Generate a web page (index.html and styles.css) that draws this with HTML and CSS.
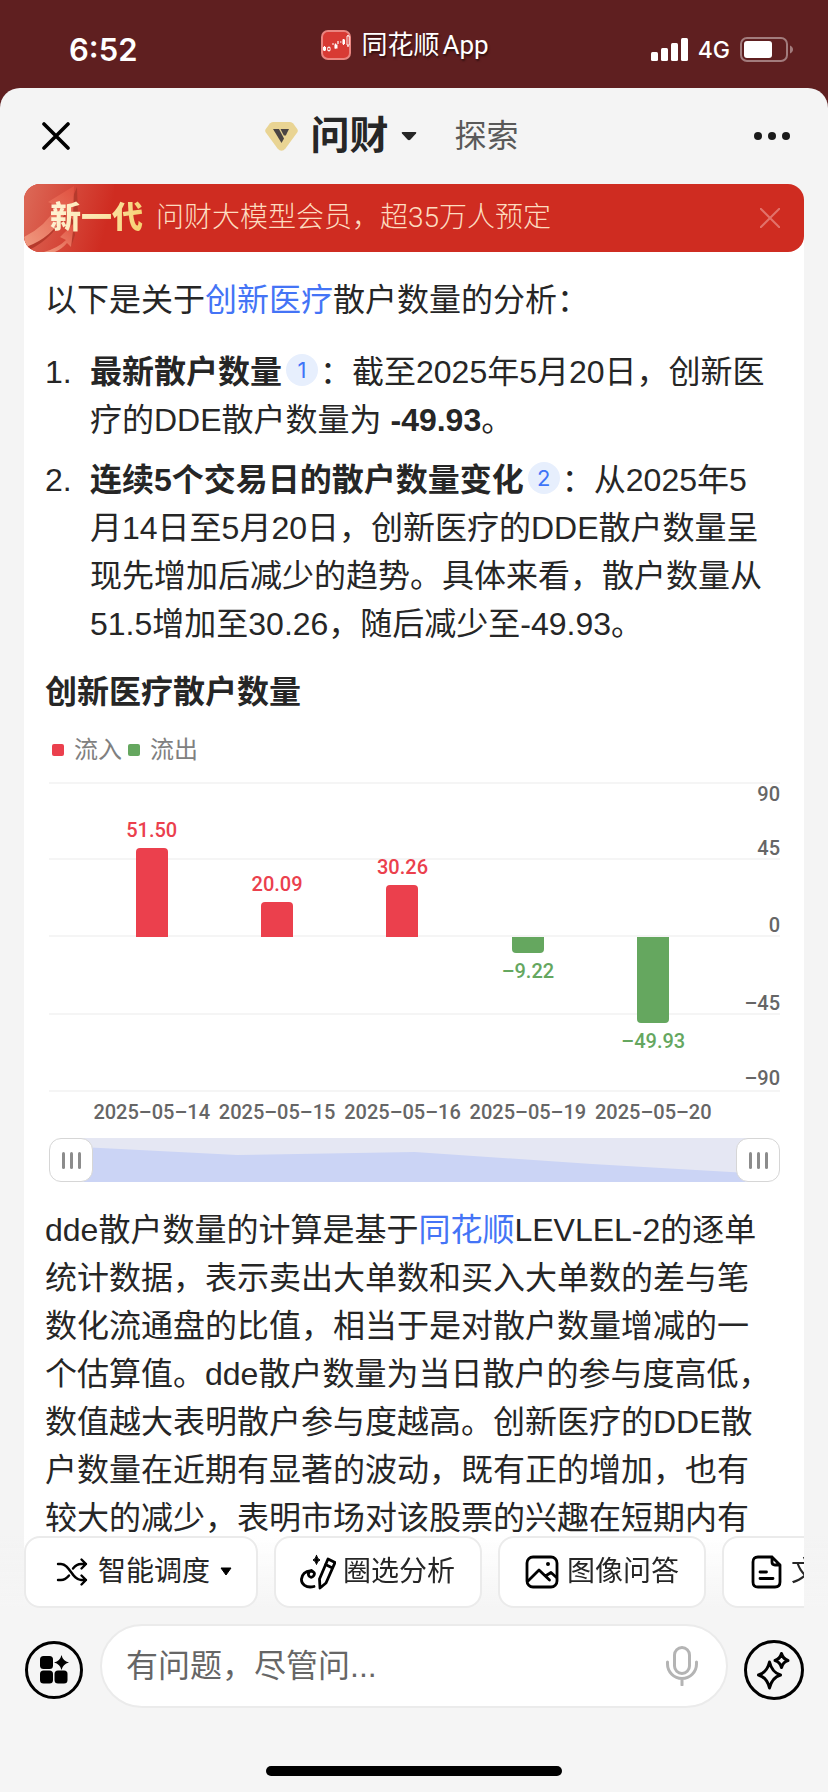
FILE: index.html
```html
<!DOCTYPE html>
<html lang="zh-CN">
<head>
<meta charset="utf-8">
<meta name="viewport" content="width=device-width, initial-scale=1">
<title>问财</title>
<link rel="stylesheet" href="styles.css">
</head>
<body>
<div class="status">
  <span class="status-time">6:52</span>
  <span class="status-app">
    <svg class="app-icon" viewBox="0 0 30 30" aria-hidden="true">
      <rect x="1" y="1" width="28" height="28" rx="6" fill="#d83a34" stroke="#ea8580" stroke-width="2"/>
      <path d="M3.500 16v5M8 16.500v5M11 14h2M14.500 13.500v5M17 11v3M19 12h1.500M22.500 9v6M27 5v12" stroke="#fff" stroke-width="1.200" fill="none"/>
      <path d="M2 17h3v3.500H2zM13.500 14.500h3v4h-3zM21.500 9.500h2.500v4.500h-2.500z" fill="#fff"/>
      <path d="M6.700 17.500h2.400v3H6.700zM26 6h2.200v9H26z" fill="#d83a34" stroke="#fff" stroke-width=".9"/>
    </svg>
    <span class="app-name"><span>同花顺</span><span>App</span></span>
  </span>
  <span class="status-right">
    <svg class="signal" viewBox="0 0 37 24" aria-hidden="true" fill="#fff">
      <rect x="0" y="14" width="7" height="9" rx="1.500"/><rect x="10" y="10" width="7" height="13" rx="1.500"/><rect x="20" y="5" width="7" height="18" rx="1.500"/><rect x="30" y="0" width="7" height="23" rx="1.500"/>
    </svg>
    <span class="network">4G</span>
    <svg class="battery" viewBox="0 0 54 26" aria-hidden="true">
      <rect x="1" y="1" width="46" height="23" rx="6" fill="none" stroke="#a27c7d" stroke-width="2"/>
      <rect x="4" y="4" width="28" height="17" rx="3" fill="#fff"/>
      <path d="M50 8.500c4 1.500 4 6.500 0 8z" fill="#a27c7d"/>
    </svg>
  </span>
</div>

<div class="sheet">
  <header class="topbar">
    <button class="icon-btn" type="button" aria-label="关闭">
      <svg class="i28" viewBox="0 0 28 28" fill="none" stroke="#000" stroke-width="3.600" stroke-linecap="round"><path d="M2 2l24 24M26 2L2 26"/></svg>
    </button>
    <nav class="tabs">
      <button class="tab tab-active" type="button">
        <svg class="gem" viewBox="0 0 33 29" aria-hidden="true">
          <path d="M8 0h17q2 0 3.200 1.600l4 5.500q1.200 1.700 0 3.500L20.500 26.500q-4 4.500-8 0L.8 10.600q-1.200-1.800 0-3.500l4-5.500Q6 0 8 0z" fill="#e9d493"/>
          <path d="M8 7h6l5 9.500-2.500 4.500z" fill="#4a4443"/><path d="M15.500 7H24l-3.200 6.500h-2z" fill="#4a4443"/>
        </svg>
        <span>问财</span>
        <svg class="caret" viewBox="0 0 16 9" aria-hidden="true"><path d="M1.500 0h13q1.500 0 .5 1.500L9.500 7.500q-1.500 1.500-3 0L1 1.500Q0 0 1.500 0z" fill="#262626"/></svg>
      </button>
      <button class="tab" type="button">探索</button>
    </nav>
    <button class="icon-btn end" type="button" aria-label="更多">
      <svg class="dots" viewBox="0 0 36 8" fill="#1a1a1a"><circle cx="4" cy="4" r="4"/><circle cx="18" cy="4" r="4"/><circle cx="32" cy="4" r="4"/></svg>
    </button>
  </header>

  <main class="card">
    <aside class="banner">
      <svg class="banner-art" viewBox="0 0 90 68" aria-hidden="true">
        <defs>
          <linearGradient id="glow" x1="0" y1="0" x2="1" y2=".2"><stop offset="0" stop-color="#dc6a58"/><stop offset=".55" stop-color="#d54739"/><stop offset="1" stop-color="#cf2c21"/></linearGradient>
          <linearGradient id="shaft" x1="0" y1="1" x2="1" y2="0"><stop offset="0" stop-color="#f09a80"/><stop offset="1" stop-color="#e0503f"/></linearGradient>
        </defs>
        <rect width="90" height="68" fill="url(#glow)"/>
        <path d="M2 58Q25 46 38 22l6 4Q30 54 5 66zM53 3l1 28-5 14-6-18zM49 37l2 14-4 12z" fill="#b63a2c"/>
        <path d="M0 53Q22 42 33 22l-9-4L50 2l-1 34-7-8Q28 54 2 63z" fill="url(#shaft)"/>
        <path d="M20 68Q34 64 42 56l-6-3 14-14-3 24-4-4q-5 6-12 9z" fill="url(#shaft)"/>
      </svg>
      <strong class="banner-tag">新一代</strong>
      <span class="banner-text">问财大模型会员，超35万人预定</span>
      <button class="icon-btn" type="button" aria-label="关闭提示">
        <svg class="i20" viewBox="0 0 20 20" fill="none" stroke="#e2726a" stroke-width="2"><path d="M0 0l20 20M20 0L0 20"/></svg>
      </button>
    </aside>

    <article class="answer">
      <p class="text">以下是关于<a href="#stock">创新医疗</a>散户数量的分析：</p>
      <ol class="list">
        <li><p class="text"><strong>最新散户数量</strong><sup class="ref">1</sup>：截至2025年5月20日，创新医疗的DDE散户数量为 <strong>-49.93</strong>。</p></li>
        <li><p class="text"><strong>连续5个交易日的散户数量变化</strong><sup class="ref">2</sup>：从2025年5月14日至5月20日，创新医疗的DDE散户数量呈现先增加后减少的趋势。具体来看，散户数量从51.5增加至30.26，随后减少至-49.93。</p></li>
      </ol>

      <section class="chart">
        <h2 class="chart-title">创新医疗散户数量</h2>
        <div class="legend"><span class="key key-in">流入</span><span class="key key-out">流出</span></div>
        <div class="plot">
          <div class="grid">
            <div class="band band-first"><span>90</span><span>45</span></div>
            <div class="band"><span>0</span></div>
            <div class="band"><span>–45</span></div>
            <div class="band band-last"><span>–90</span></div>
          </div>
          <div class="bars">
            <div class="col up"><span>51.50</span><i style="height:28.600%"></i></div>
            <div class="col up"><span>20.09</span><i style="height:11.200%"></i></div>
            <div class="col up"><span>30.26</span><i style="height:16.800%"></i></div>
            <div class="col down"><i style="height:5.100%"></i><span>–9.22</span></div>
            <div class="col down"><i style="height:27.700%"></i><span>–49.93</span></div>
          </div>
        </div>
        <div class="dates"><span>2025–05–14</span><span>2025–05–15</span><span>2025–05–16</span><span>2025–05–19</span><span>2025–05–20</span></div>
        <div class="range">
          <button class="handle" type="button" aria-label="起始"><i></i><i></i><i></i></button>
          <svg class="range-area" viewBox="0 0 688 44" preserveAspectRatio="none" aria-hidden="true"><rect width="688" height="44" fill="#e5e7f3"/><path d="M0 9L161 17 344 14 527 26 688 35V44H0z" fill="#cbd4f5"/></svg>
          <button class="handle" type="button" aria-label="结束"><i></i><i></i><i></i></button>
        </div>
      </section>

      <p class="text">dde散户数量的计算是基于<a href="#ths">同花顺</a>LEVLEL-2的逐单统计数据，表示卖出大单数和买入大单数的差与笔数化流通盘的比值，相当于是对散户数量增减的一个估算值。dde散户数量为当日散户的参与度高低，数值越大表明散户参与度越高。创新医疗的DDE散户数量在近期有显著的波动，既有正的增加，也有较大的减少，表明市场对该股票的兴趣在短期内有</p>
    </article>
  </main>
</div>

<footer class="dock">
  <div class="chips">
    <button class="chip chip-menu" type="button">
      <svg class="i32" viewBox="0 0 32 32" fill="none" stroke="#000" stroke-width="2.400" stroke-linecap="round" stroke-linejoin="round"><path d="M2 8h3c9 0 11 16 20 16h5M2 24h3c3.500 0 6-2 8-4.500M17 12.500C19 10 21.500 8 25 8h5M25.500 3.500L30 8l-4.500 4.500M25.500 19.500L30 24l-4.500 4.500"/></svg>
      <span>智能调度</span>
      <svg class="tri" viewBox="0 0 12 10" aria-hidden="true"><path d="M1 1h10L6 8z" stroke="#000" stroke-linejoin="round"/></svg>
    </button>
    <button class="chip" type="button">
      <svg class="i36" viewBox="0 0 36 36" fill="none" stroke="#000" stroke-width="2.800" stroke-linecap="round" stroke-linejoin="round"><path d="M14 32.500C6 34.500 1 30 1.500 25c.4-4.500 4-8 8.500-8 4 0 5.500 2.500 3.500 5-1.500 2-4.500 1.500-5-1s1.500-4 3-4.500"/><path d="M28 5l7 3.500L26 29l-6 5-.5-9zM25.500 10.500l7 3.500"/><path d="M16.500 1.500q.8 3.700 3.500 4.500-2.700.8-3.500 4.500-.8-3.700-3.500-4.500 2.700-.8 3.500-4.500z" fill="#000" stroke-width="1"/></svg>
      <span>圈选分析</span>
    </button>
    <button class="chip" type="button">
      <svg class="i36" viewBox="0 0 36 36" fill="none" stroke="#000" stroke-width="2.800" stroke-linecap="round" stroke-linejoin="round"><rect x="3" y="3" width="30" height="30" rx="6"/><path d="M4 27l11-11 10.500 10M21.500 22l5.500-3.500 5.500 5"/><circle cx="24" cy="10" r="1" fill="#000" stroke-width="2"/></svg>
      <span>图像问答</span>
    </button>
    <button class="chip" type="button">
      <svg class="i36" viewBox="0 0 36 36" fill="none" stroke="#000" stroke-width="2.800" stroke-linecap="round" stroke-linejoin="round"><path d="M10 3h14l8 8v17q0 5-5 5H10q-5 0-5-5V8q0-5 5-5zM24 3v5q0 3 3 3h5M12 18h6.500M12 24.500h13"/></svg>
      <span>文档问答</span>
    </button>
  </div>
  <div class="composer">
    <button class="icon-btn round" type="button" aria-label="功能">
      <svg class="i60" viewBox="0 0 60 60"><circle cx="30" cy="30" r="27.500" fill="none" stroke="#000" stroke-width="3"/><rect x="16" y="16" width="13" height="13" rx="3.500"/><rect x="16" y="30.500" width="13" height="13" rx="3.500"/><rect x="30.500" y="30.500" width="13" height="13" rx="3.500"/><path d="M37.500 15q1.300 6 7.500 7.500-6.200 1.500-7.500 7.500-1.300-6-7.500-7.500 6.200-1.500 7.500-7.500z"/></svg>
    </button>
    <div class="field">
      <input class="field-input" type="text" aria-label="提问" placeholder="有问题，尽管问...">
      <button class="icon-btn" type="button" aria-label="语音">
        <svg class="mic" viewBox="0 0 32 40" fill="none" stroke="#b4b4b4" stroke-width="3" stroke-linecap="round"><rect x="8.500" y="1.500" width="15" height="26" rx="7.500"/><path d="M1.500 16v2a14.500 14.500 0 0 0 29 0v-2M16 33v6"/></svg>
      </button>
    </div>
    <button class="icon-btn round" type="button" aria-label="智能">
      <svg class="i60" viewBox="0 0 60 60" fill="none" stroke="#000" stroke-width="3" stroke-linejoin="round"><circle cx="30" cy="30" r="28.500"/><path d="M25.500 22q2.500 10.500 11 13-8.500 2.500-11 13-2.500-10.500-11-13 8.500-2.500 11-13z"/><path d="M37.500 13.500q1.500 5.500 6.500 7-5 1.500-6.500 7-1.500-5.500-6.500-7 5-1.500 6.500-7z"/></svg>
    </button>
  </div>
  <div class="home"></div>
</footer>
</body>
</html>
```
FILE: styles.css
```css
* { box-sizing: border-box; }
body {
  margin: 0;
  min-height: 100vh;
  background: #5f1f20;
  color: #262626;
  font-family: "Liberation Sans", "Noto Sans CJK SC", sans-serif;
  font-size: 32px;
  overflow-x: hidden;
  display: flex;
  flex-direction: column;
}
button {
  margin: 0;
  padding: 0;
  border: 0;
  background: none;
  color: inherit;
  font: inherit;
}
svg { display: block; flex: none; }
p, ol, h2 { margin: 0; padding: 0; }
a { color: #4474f6; text-decoration: none; }

.icon-btn { display: flex; flex: none; }
.i20 { width: 20px; height: 20px; }
.i28 { width: 28px; height: 28px; }
.i32 { width: 32px; height: 32px; }
.i36 { width: 36px; height: 36px; }
.i60 { width: 60px; height: 60px; }

.status {
  height: 88px;
  padding: 12px 34px 0;
  display: grid;
  grid-template-columns: 1fr auto 1fr;
  align-items: center;
  color: #fff;
}
.status-time {
  padding-left: 35px;
  font: 600 31px/40px Inter, sans-serif;
}
.status-app {
  display: flex;
  align-items: center;
  gap: 10px;
  padding: 0 18px 10px 0;
}
.app-icon { width: 30px; height: 30px; }
.app-name {
  display: flex;
  gap: 3px;
  font: 400 26px/32px Roboto, "Noto Sans CJK SC", sans-serif;
  text-shadow: 1px 2px 2px rgba(0, 0, 0, .5);
}
.status-right {
  display: flex;
  align-items: center;
  justify-content: flex-end;
  gap: 10px;
}
.signal { width: 37px; height: 24px; }
.network { font: 500 23px/28px Inter, sans-serif; }
.battery { width: 54px; height: 26px; }

.sheet {
  flex: 1;
  display: flex;
  flex-direction: column;
  padding: 0 24px;
  background: #f4f4f4;
  border-radius: 20px 20px 0 0;
}
.topbar {
  height: 96px;
  padding: 0 14px 0 18px;
  display: grid;
  grid-template-columns: 1fr auto 1fr;
  align-items: center;
}
.tabs {
  display: flex;
  align-items: center;
  gap: 38px;
  padding-right: 48px;
}
.tab { display: flex; align-items: center; color: #595959; line-height: 48px; }
.tab-active {
  gap: 12px;
  color: #262626;
  font-size: 39px;
  font-weight: 700;
}
.gem { width: 33px; height: 29px; }
.caret { width: 16px; height: 9px; }
.end { justify-self: end; }
.dots { width: 36px; height: 8px; }

.card {
  flex: 1;
  background: #fff;
  border-radius: 16px 16px 0 0;
}
.banner {
  position: relative;
  height: 68px;
  padding: 0 24px 0 26px;
  display: flex;
  align-items: center;
  gap: 13px;
  overflow: hidden;
  background: #cf2c21;
  border-radius: 16px;
}
.banner-art {
  position: absolute;
  left: 0;
  top: 0;
  width: 90px;
  height: 68px;
}
.banner-tag {
  position: relative;
  font-size: 31px;
  line-height: 40px;
  font-weight: 900;
  background: linear-gradient(100deg, #fff3d6, #fbe3a4 60%, #f6cf6c);
  -webkit-background-clip: text;
  background-clip: text;
  color: transparent;
}
.banner-text {
  flex: 1;
  color: #fddcc0;
  font: 300 28px/40px Roboto, "Noto Sans CJK SC", sans-serif;
}

.answer { padding: 24px 28px 240px 21px; }
.text { line-height: 48px; }
.list {
  list-style: none;
  counter-reset: item;
  padding: 24px 0 20px;
  display: grid;
  gap: 12px;
}
.list li {
  counter-increment: item;
  display: grid;
  grid-template-columns: 45px 1fr;
  line-height: 48px;
}
.list li::before { content: counter(item) "."; }
.ref {
  display: inline-block;
  width: 32px;
  height: 32px;
  margin: 0 2px 0 4px;
  border-radius: 50%;
  background: #e7effd;
  color: #3e74f8;
  font: 400 22px/32px Inter, sans-serif;
  text-align: center;
  vertical-align: text-top;
}

.chart { padding: 0 0 24px 4px; margin-right: -4px; }
.chart-title {
  margin-left: -4px;
  font-size: 32px;
  line-height: 48px;
  font-weight: 700;
}
.legend {
  display: flex;
  gap: 6px;
  padding: 16px 0 14px 3px;
  color: #808080;
  font-size: 24px;
  line-height: 36px;
}
.key { display: flex; align-items: center; gap: 10px; }
.key::before { content: ""; width: 12px; height: 12px; border-radius: 2px; }
.key-in::before { background: #eb404d; }
.key-out::before { background: #65a75f; }

.plot {
  position: relative;
  height: 310px;
  font: 500 20px/24px Roboto, sans-serif;
}
.grid {
  height: 100%;
  display: grid;
  grid-template-rows: repeat(4, 1fr);
  color: #666;
  line-height: 20px;
}
.band {
  display: flex;
  flex-direction: column;
  justify-content: flex-end;
  align-items: flex-end;
  border-bottom: 2px solid #f5f5f5;
}
.band-first { justify-content: space-between; border-top: 2px solid #f5f5f5; }
.band-last { padding-bottom: 2px; }
.bars {
  position: absolute;
  inset: 0;
  padding: 0 64px 0 40px;
  display: grid;
  grid-template-columns: repeat(5, 1fr);
}
.col {
  display: flex;
  flex-direction: column;
  align-items: center;
  gap: 6px;
}
.col i { width: 32px; }
.up { justify-content: flex-end; color: #eb404d; }
.up::after { content: ""; height: 50%; margin-top: -6px; }
.up i { background: #eb404d; border-radius: 4px 4px 0 0; }
.down { color: #65a75f; }
.down::before { content: ""; height: 50%; margin-bottom: -6px; }
.down i { background: #65a75f; border-radius: 0 0 4px 4px; }
.dates {
  display: grid;
  grid-template-columns: repeat(5, 1fr);
  padding: 8px 64px 14px 40px;
  color: #666;
  font: 500 20px/24px Roboto, sans-serif;
  text-align: center;
  white-space: nowrap;
}
.range { display: flex; height: 44px; }
.range-area { flex: 1; width: 0; height: 44px; margin: 0 -12px; }
.handle {
  z-index: 1;
  flex: none;
  width: 44px;
  height: 44px;
  display: flex;
  align-items: center;
  justify-content: center;
  gap: 5px;
  border: 1px solid #d6d6d6;
  border-radius: 12px;
  background: #fff;
}
.handle i { width: 3px; height: 17px; border-radius: 2px; background: #8c8c8c; }

.dock {
  position: fixed;
  left: 0;
  right: 0;
  bottom: 0;
  background: linear-gradient(rgba(245, 245, 245, 0), #f5f5f5 72px);
}
.chips {
  margin: 0 24px 16px;
  display: flex;
  gap: 16px;
  overflow: hidden;
}
.chip {
  flex: none;
  height: 72px;
  padding: 0 25px 0 24px;
  display: flex;
  align-items: center;
  gap: 7px;
  border: 2px solid #ebebeb;
  border-radius: 16px;
  background: #fff;
  font-size: 28px;
  line-height: 40px;
}
.chip-menu { gap: 10px; padding: 0 24px 0 30px; }
.tri { width: 12px; height: 10px; }
.composer {
  padding: 0 24px;
  display: flex;
  align-items: center;
  gap: 16px;
}
.round { padding-top: 8px; }
.field {
  flex: 1;
  min-width: 0;
  height: 84px;
  padding: 0 28px 0 24px;
  display: flex;
  align-items: center;
  border: 2px solid #ebebeb;
  border-radius: 42px;
  background: #fff;
}
.field-input {
  flex: 1;
  min-width: 0;
  height: 48px;
  padding: 0;
  border: 0;
  outline: 0;
  background: none;
  font: inherit;
  color: #262626;
}
.field-input::placeholder { color: #666; opacity: 1; }
.mic { width: 32px; height: 40px; }
.home {
  width: 296px;
  height: 10px;
  margin: 58px auto 16px;
  border-radius: 5px;
  background: #000;
}
```
